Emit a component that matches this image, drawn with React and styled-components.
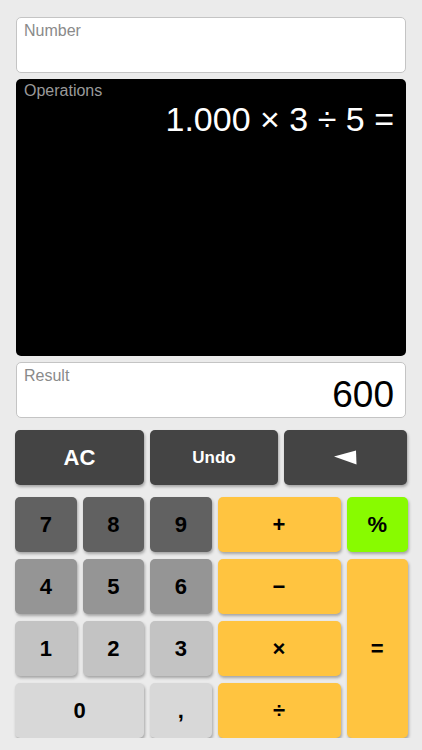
import React from "react";
import styled, { createGlobalStyle } from "styled-components";

const GlobalStyle = createGlobalStyle`
  html, body {
    margin: 0;
    padding: 0;
    background: #ebebeb;
    font-family: "Liberation Sans", Arial, sans-serif;
  }
`;

const colors = {
  dark: "#444444",
  row1: "#616161",
  row2: "#959595",
  row3: "#c3c3c3",
  row4: "#d8d8d8",
  orange: "#ffc440",
  green: "#88fb00",
};

const keys = [
  { label: "7", bg: colors.row1 },
  { label: "8", bg: colors.row1 },
  { label: "9", bg: colors.row1 },
  { label: "+", bg: colors.orange },
  { label: "%", bg: colors.green },
  { label: "4", bg: colors.row2 },
  { label: "5", bg: colors.row2 },
  { label: "6", bg: colors.row2 },
  { label: "−", bg: colors.orange },
  { label: "=", bg: colors.orange, rows: 3 },
  { label: "1", bg: colors.row3 },
  { label: "2", bg: colors.row3 },
  { label: "3", bg: colors.row3 },
  { label: "×", bg: colors.orange },
  { label: "0", bg: colors.row4, cols: 2 },
  { label: ",", bg: colors.row4 },
  { label: "÷", bg: colors.orange },
];

const BackArrow = () => (
  <svg width="23" height="15" viewBox="0 0 23 15">
    <polygon points="0,6.5 22,0.5 22.5,14.5" fill="#fff" />
  </svg>
);

const App = () => {
  return (
    <>
      <GlobalStyle />
      <StyledCalculator>
        <Display>
          <Label>Number</Label>
        </Display>
        <Operations>
          <Label dark>Operations</Label>
          <Expression>1.000 × 3 ÷ 5 =</Expression>
        </Operations>
        <Display>
          <Label>Result</Label>
          <ResultValue>600</ResultValue>
        </Display>

        <TopRow>
          <Key bg={colors.dark} light>AC</Key>
          <Key bg={colors.dark} light small>
            Undo
          </Key>
          <Key bg={colors.dark} light>
            <BackArrow />
          </Key>
        </TopRow>

        <KeyGrid>
          {keys.map((k) => (
            <Key key={k.label} bg={k.bg} rows={k.rows} cols={k.cols}>
              {k.label}
            </Key>
          ))}
        </KeyGrid>
      </StyledCalculator>
    </>
  );
};

const StyledCalculator = styled.div`
  display: flex;
  flex-direction: column;
  padding: 17px 14px 0 15px;
`;

const Display = styled.div`
  display: flex;
  flex-direction: column;
  box-sizing: border-box;
  height: 56px;
  margin: 0 2px 6px 1px;
  padding: 4px 11px 0 7px;
  background: #fff;
  border: 1px solid #c4c4c4;
  border-radius: 5px;
`;

const Operations = styled.div`
  display: flex;
  flex-direction: column;
  box-sizing: border-box;
  height: 277px;
  margin: 0 2px 6px 1px;
  padding: 3px 12px 0 8px;
  background: #000;
  border-radius: 5px;
`;

const Label = styled.div`
  font-size: 16px;
  line-height: 18px;
  color: ${(p) => (p.dark ? "#9a9a9a" : "#8a8a8a")};
`;

const Expression = styled.div`
  font-size: 34px;
  line-height: 38px;
  color: #fff;
  text-align: right;
  white-space: nowrap;
`;

const ResultValue = styled.div`
  margin-top: -9px;
  font-size: 37px;
  line-height: 37px;
  color: #000;
  text-align: right;
`;

const TopRow = styled.div`
  display: grid;
  grid-template-columns: 129px 128px 123px;
  gap: 6px;
  margin-top: 6px;
  height: 55px;
`;

const KeyGrid = styled.div`
  display: grid;
  grid-template-columns: 1fr 1fr 1fr 2fr 1fr;
  grid-auto-rows: 55px;
  column-gap: 6px;
  row-gap: 7px;
  margin-top: 12px;
`;

const Key = styled.div`
  display: flex;
  align-items: center;
  justify-content: center;
  grid-row: ${(p) => (p.rows ? `span ${p.rows}` : "auto")};
  grid-column: ${(p) => (p.cols ? `span ${p.cols}` : "auto")};
  background: ${(p) => p.bg};
  color: ${(p) => (p.light ? "#fff" : "#000")};
  font-size: ${(p) => (p.small ? "17px" : "22px")};
  font-weight: bold;
  border-radius: 5px;
  box-shadow: 1px 2px 3px rgba(0, 0, 0, 0.3);
  cursor: pointer;
  user-select: none;
`;

export default App;
